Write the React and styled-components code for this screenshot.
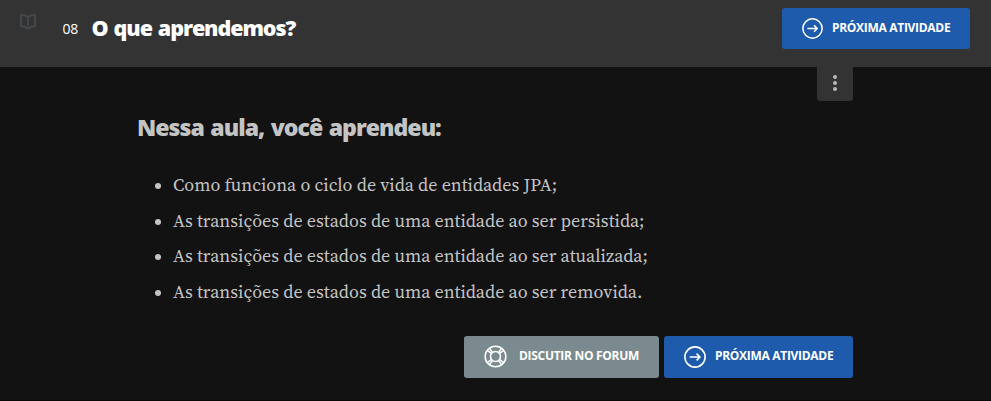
import React from "react";
import styled, { createGlobalStyle } from "styled-components";

const GlobalStyle = createGlobalStyle`
  *, *::before, *::after { box-sizing: border-box; }
  body { margin: 0; background: #121212; font-family: "Open Sans", sans-serif; }
`;

const Page = styled.div`
  height: 401px;
  overflow: hidden;
  background: #121212;
  border-bottom: 1px solid #080808;
`;

const Header = styled.header`
  display: flex;
  align-items: flex-start;
  height: 67px;
  padding: 8px 21px 0 20px;
  background: #333333;
`;

const BookIcon = styled.svg`
  width: 16px;
  height: 16px;
  margin-top: 6px;
  fill: none;
  stroke: #43494e;
  stroke-width: 1.9;
  stroke-linejoin: round;
`;

const TaskNumber = styled.span`
  width: 29px;
  margin: 11px 0 0 26.5px;
  color: #fff;
  font-size: 14px;
  font-weight: 500;
  line-height: 20px;
  letter-spacing: -0.2px;
`;

const Title = styled.h1`
  flex: 1;
  margin: 5px 0 0;
  color: #fff;
  font-size: 21.5px;
  font-weight: 800;
  line-height: 30px;
  letter-spacing: -1.08px;
  word-spacing: 1.5px;
  white-space: nowrap;
`;

const Button = styled.button`
  display: flex;
  align-items: center;
  width: ${(p) => p.$width}px;
  height: ${(p) => p.$height}px;
  padding: 0 0 0 20px;
  border: 0;
  border-radius: 3px;
  background: ${(p) => (p.$muted ? "#7b8a8e" : "#1e5bac")};
  color: #fff;
`;

const ButtonIcon = styled.svg`
  flex: none;
  width: ${(p) => p.$size}px;
  height: ${(p) => p.$size}px;
  fill: none;
  stroke: #fff;
  stroke-width: 1.6;
`;

const ButtonLabel = styled.span`
  margin: -2px 0 0 ${(p) => p.$gap}px;
  font: 700 12px/18px "Open Sans", sans-serif;
  letter-spacing: -0.3px;
  white-space: nowrap;
`;

const Main = styled.main`
  width: 716px;
  margin-left: 137px;
`;

const OptionsTab = styled.button`
  display: flex;
  flex-direction: column;
  align-items: center;
  justify-content: center;
  gap: 2.4px;
  width: 36px;
  height: 34px;
  margin-left: auto;
  padding: 0 0 2px;
  border: 0;
  border-radius: 0 0 3px 3px;
  background: #333333;
`;

const Dot = styled.i`
  width: 4px;
  height: 4px;
  border-radius: 50%;
  background: #b3b9bc;
`;

const Heading = styled.h2`
  margin: 10px 0 0;
  color: #c4c4c4;
  font-size: 23.1px;
  font-weight: 800;
  line-height: 32px;
  letter-spacing: -1px;
  word-spacing: 1.5px;
  white-space: nowrap;
`;

const List = styled.ul`
  margin: 24px 0 0;
  padding: 0 0 0 18px;
  list-style: none;
`;

const Item = styled.li`
  display: flex;
  align-items: center;
  height: 35.7px;
  color: #c4c4c4;
  font: 18px/35.7px "Source Serif Pro", "Source Serif 4", "Liberation Serif", serif;
  white-space: nowrap;

  &::before {
    content: "";
    width: 6px;
    height: 6px;
    margin: 2px 12px 0 0;
    border-radius: 50%;
    background: #c4c4c4;
  }
`;

const Actions = styled.div`
  display: flex;
  justify-content: flex-end;
  gap: 5px;
  margin-top: 26px;
`;

const items = [
  "Como funciona o ciclo de vida de entidades JPA;",
  "As transições de estados de uma entidade ao ser persistida;",
  "As transições de estados de uma entidade ao ser atualizada;",
  "As transições de estados de uma entidade ao ser removida.",
];

function ArrowIcon({ size }) {
  return (
    <ButtonIcon $size={size} viewBox="0 0 22 22">
      <circle cx="11" cy="11" r="10.1" />
      <path d="M5.7 11h10.2M12.6 7.6l3.4 3.4-3.4 3.4" strokeLinejoin="round" />
    </ButtonIcon>
  );
}

function LifebuoyIcon() {
  return (
    <ButtonIcon $size={23} viewBox="0 0 24 24">
      <circle cx="12" cy="12" r="10.8" />
      <circle cx="12" cy="12" r="5.2" />
      <path d="M3.7 5.8l4 3M5.8 3.7l3 4M18.2 3.7l-3 4M20.3 5.8l-4 3M20.3 18.2l-4-3M18.2 20.3l-3-4M5.8 20.3l3-4M3.7 18.2l4-3" />
    </ButtonIcon>
  );
}

export default function App() {
  return (
    <>
      <GlobalStyle />
      <Page>
        <Header>
          <BookIcon viewBox="0 0 16 16">
            <path d="M8 3.8C7 2.4 5 1 1 1v11.2c3 0 5.5.8 7 2.6 1.5-1.8 4-2.6 7-2.6V1c-4 0-6 1.4-7 2.8v8" />
          </BookIcon>
          <TaskNumber>08</TaskNumber>
          <Title>O que aprendemos?</Title>
          <Button $width={188} $height={41}>
            <ArrowIcon size={21} />
            <ButtonLabel $gap={9}>PRÓXIMA ATIVIDADE</ButtonLabel>
          </Button>
        </Header>
        <Main>
          <OptionsTab aria-label="Opções">
            <Dot />
            <Dot />
            <Dot />
          </OptionsTab>
          <Heading>Nessa aula, você aprendeu:</Heading>
          <List>
            {items.map((text) => (
              <Item key={text}>{text}</Item>
            ))}
          </List>
          <Actions>
            <Button $width={195} $height={42} $muted>
              <LifebuoyIcon />
              <ButtonLabel $gap={12}>DISCUTIR NO FORUM</ButtonLabel>
            </Button>
            <Button $width={189} $height={42}>
              <ArrowIcon size={22} />
              <ButtonLabel $gap={9}>PRÓXIMA ATIVIDADE</ButtonLabel>
            </Button>
          </Actions>
        </Main>
      </Page>
    </>
  );
}
